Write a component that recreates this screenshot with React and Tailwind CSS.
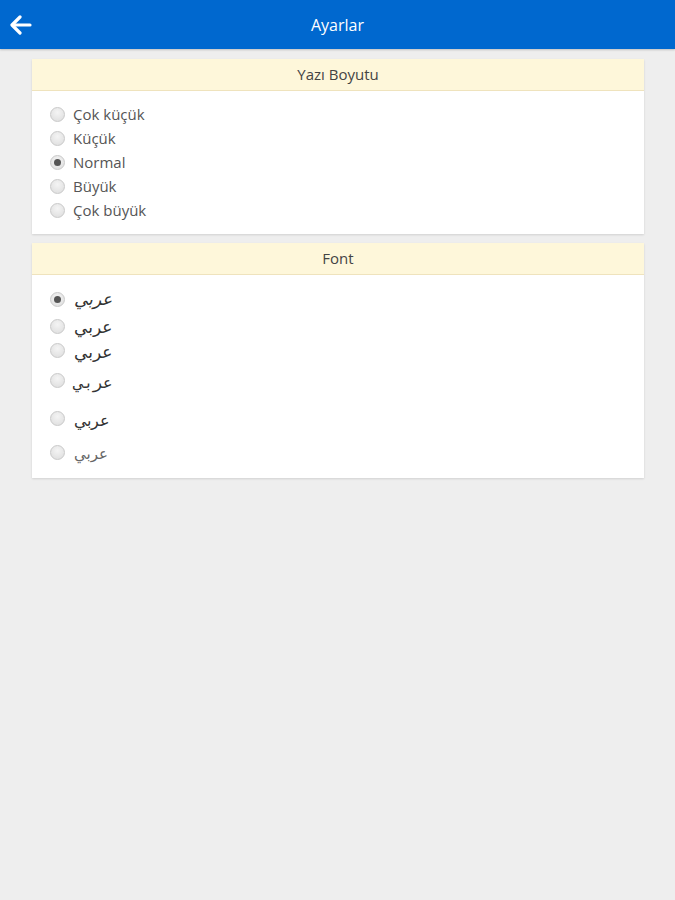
import React from "react";

function Radio({ checked }) {
  return (
    <span className="relative inline-flex h-[15px] w-[15px] shrink-0 items-center justify-center rounded-full border border-[#c9c9c9] bg-[radial-gradient(circle_at_50%_35%,#f4f4f4,#dcdcdc)]">
      {checked && <span className="h-[7px] w-[7px] rounded-full bg-[#555]" />}
    </span>
  );
}

function Card({ title, children, className = "" }) {
  return (
    <div className={"ml-[32px] mr-[31px] bg-white shadow-[0_1px_2px_rgba(0,0,0,0.12)] " + className}>
      <div className="flex h-[32px] items-center justify-center border-b border-[#efe3bd] bg-[#fef7da] text-[15px] text-[#444]">
        {title}
      </div>
      {children}
    </div>
  );
}

export default function App() {
  const sizes = ["Çok küçük", "Küçük", "Normal", "Büyük", "Çok büyük"];
  const fonts = [
    { h: "h-[24px]", cls: "text-[17px] font-['DejaVu_Serif',serif] italic", checked: true },
    { h: "h-[30px]", cls: "text-[17px] font-['DejaVu_Sans',sans-serif] pt-[2px]" },
    { h: "h-[18px]", cls: "text-[17px] font-['DejaVu_Sans',sans-serif] pt-[5px]" },
    { h: "h-[42px]", cls: "text-[16px] font-['DejaVu_Sans_Mono',monospace] pt-[6px]" },
    { h: "h-[34px]", cls: "text-[16px] font-['DejaVu_Serif',serif] pt-[6px]" },
    { h: "h-[34px]", cls: "text-[15px] font-['DejaVu_Sans',sans-serif] tracking-[3px] text-[#666] pt-[5px]" },
  ];
  return (
    <div className="min-h-[900px] bg-[#eeeeee] font-['Open_Sans','Noto_Sans',sans-serif]">
      <div className="relative flex h-[49px] items-center justify-center bg-[#0068cf] shadow-[0_1px_2px_rgba(0,0,0,0.2)]">
        <svg className="absolute left-[10px] top-[15px]" width="22" height="20" viewBox="0 0 22 20" fill="none">
          <path d="M10 2 L2 10 L10 18" stroke="white" strokeWidth="3.2" strokeLinecap="round" strokeLinejoin="round" />
          <path d="M3 10 H20" stroke="white" strokeWidth="3.2" strokeLinecap="round" />
        </svg>
        <span className="text-[16px] text-white">Ayarlar</span>
      </div>
      <div className="h-[10px]" />
      <Card title="Yazı Boyutu">
        <div className="pt-[11px] pb-[12px] pl-[18px]">
          {sizes.map((s, i) => (
            <div key={s} className="flex h-[24px] items-center gap-[8px]">
              <Radio checked={i === 2} />
              <span className="text-[15px] text-[#555]">{s}</span>
            </div>
          ))}
        </div>
      </Card>
      <Card title="Font" className="mt-[9px]">
        <div className="pt-[12px] pb-[9px] pl-[18px]">
          {fonts.map((f, i) => (
            <div key={i} className={"flex items-center gap-[9px] " + f.h}>
              <Radio checked={f.checked} />
              <span className={"leading-none text-[#333] " + f.cls} dir="rtl">عربي</span>
            </div>
          ))}
        </div>
      </Card>
    </div>
  );
}
